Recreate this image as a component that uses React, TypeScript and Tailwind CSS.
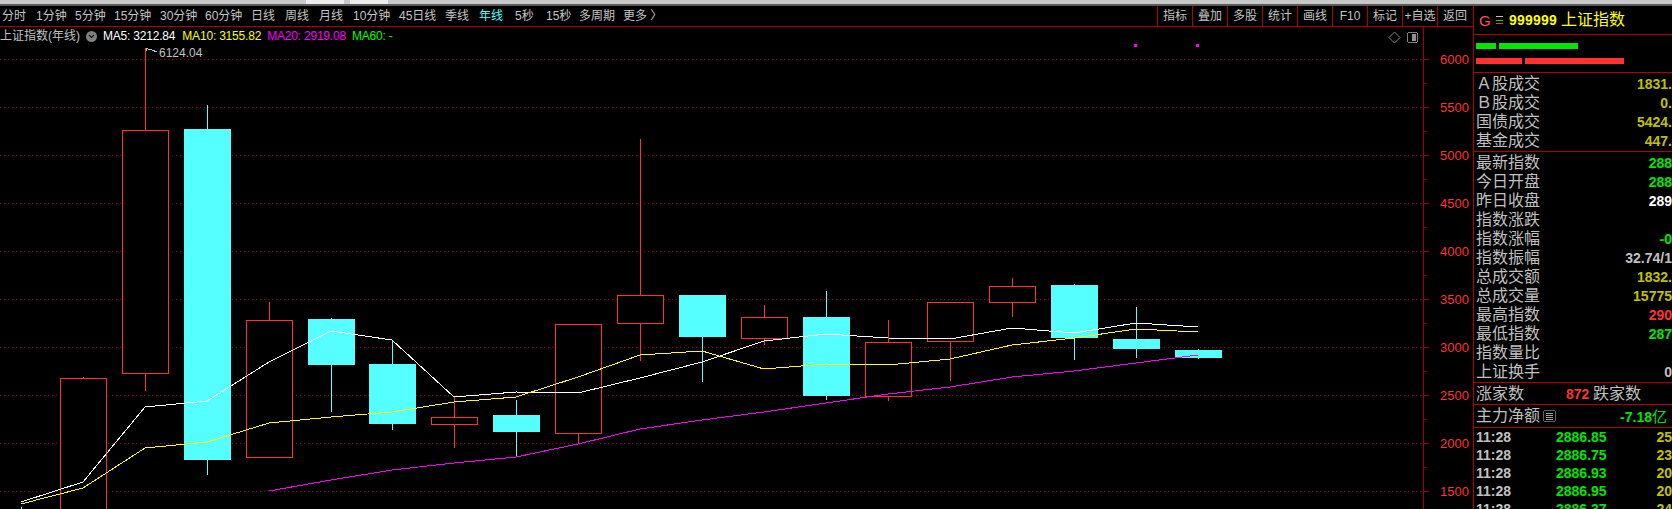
const CJK = "font-['Liberation_Sans','Noto_Sans_CJK_SC',sans-serif]";

const periods = [
  { label: "分时", cls: "w-[24px]" },
  { label: "1分钟", cls: "w-[30px] ml-[10px]" },
  { label: "5分钟", cls: "w-[30px] ml-[9px]" },
  { label: "15分钟", cls: "w-[36px] ml-[9px]" },
  { label: "30分钟", cls: "w-[36px] ml-[10px]" },
  { label: "60分钟", cls: "w-[36px] ml-[9px]" },
  { label: "日线", cls: "w-[24px] ml-[10px]" },
  { label: "周线", cls: "w-[24px] ml-[10px]" },
  { label: "月线", cls: "w-[24px] ml-[10px]" },
  { label: "10分钟", cls: "w-[36px] ml-[10px]" },
  { label: "45日线", cls: "w-[36px] ml-[10px]" },
  { label: "季线", cls: "w-[24px] ml-[10px]" },
  { label: "年线", cls: "w-[24px] ml-[10px] text-[#55ffff]" },
  { label: "5秒", cls: "w-[18px] ml-[12px]" },
  { label: "15秒", cls: "w-[24px] ml-[13px]" },
  { label: "多周期", cls: "w-[36px] ml-[9px]" },
  { label: "更多 〉", cls: "w-[36px] ml-[8px]" },
];

const tools = ["指标", "叠加", "多股", "统计", "画线", "F10", "标记", "+自选", "返回"];

const GRID = [59, 107, 155, 203, 251, 299, 347, 395, 443, 491];
const MINOR = [83, 131, 179, 227, 275, 323, 371, 419, 467];
const AXIS = ["6000", "5500", "5000", "4500", "4000", "3500", "3000", "2500", "2000", "1500"];

// x = candle left edge, top/bottom = body, hi/lo = wick
const candles = [
  { x: 60, top: 378, bottom: 520, hi: 377, lo: 530, up: true },
  { x: 122, top: 130, bottom: 373, hi: 48, lo: 391, up: true },
  { x: 184, top: 129, bottom: 460, hi: 105, lo: 475, up: false },
  { x: 246, top: 320, bottom: 457, hi: 302, lo: 457, up: true },
  { x: 308, top: 319, bottom: 365, hi: 318, lo: 412, up: false },
  { x: 369, top: 364, bottom: 424, hi: 340, lo: 430, up: false },
  { x: 431, top: 417, bottom: 424, hi: 397, lo: 448, up: true },
  { x: 493, top: 415, bottom: 432, hi: 400, lo: 456, up: false },
  { x: 555, top: 324, bottom: 433, hi: 324, lo: 444, up: true },
  { x: 617, top: 295, bottom: 323, hi: 139, lo: 361, up: true },
  { x: 679, top: 295, bottom: 337, hi: 295, lo: 382, up: false },
  { x: 741, top: 317, bottom: 338, hi: 305, lo: 345, up: true },
  { x: 803, top: 317, bottom: 396, hi: 291, lo: 400, up: false },
  { x: 865, top: 342, bottom: 396, hi: 320, lo: 401, up: true },
  { x: 927, top: 302, bottom: 341, hi: 302, lo: 381, up: true },
  { x: 989, top: 286, bottom: 302, hi: 278, lo: 317, up: true },
  { x: 1051, top: 285, bottom: 338, hi: 284, lo: 360, up: false },
  { x: 1113, top: 339, bottom: 349, hi: 307, lo: 358, up: false },
  { x: 1175, top: 350, bottom: 358, hi: 349, lo: 359, up: false },
];

const ma5 = "21,502 83,482 145,407 207,401 269,362 331,331 392,340 454,397 516,392 578,393 640,378 702,362 764,341 826,334 888,338 950,339 1012,328 1074,333 1136,323 1198,327";
const ma10 = "21,504 83,488 145,448 207,442 269,423 331,417 392,412 454,402 516,397 578,377 640,355 702,351 764,369 826,364 888,365 950,359 1012,345 1074,338 1136,329 1198,332";
const ma20 = "269,491 331,480 392,470 454,463 516,457 578,444 640,429 702,420 764,412 826,403 888,394 950,387 1012,377 1074,371 1136,363 1198,355";

function Chart() {
  return (
    <svg width="1473" height="482" viewBox="0 27 1473 482" shapeRendering="crispEdges" className="block">
      {GRID.map((y) => (
        <line key={y} x1="0" x2="1423" y1={y + 0.5} y2={y + 0.5} stroke="#a80000" strokeDasharray="1 3" />
      ))}
      {GRID.map((y) => (
        <line key={y} x1="1423" x2="1429" y1={y + 0.5} y2={y + 0.5} stroke="#a80000" />
      ))}
      {MINOR.map((y) => (
        <line key={y} x1="1423" x2="1426" y1={y + 0.5} y2={y + 0.5} stroke="#a80000" />
      ))}
      <line x1="1423.5" x2="1423.5" y1="27" y2="509" stroke="#a80000" />
      <line x1="21.5" x2="21.5" y1="507" y2="509" stroke="#55ffff" />
      {candles.map((c) => {
        const color = c.up ? "#ff3232" : "#55ffff";
        const mid = c.x + 23.5;
        return (
          <g key={c.x}>
            <line x1={mid} x2={mid} y1={c.hi} y2={c.top} stroke={color} />
            <line x1={mid} x2={mid} y1={c.bottom} y2={c.lo} stroke={color} />
            {c.up ? (
              <rect x={c.x + 0.5} y={c.top + 0.5} width="46" height={c.bottom - c.top} fill="#000" stroke={color} />
            ) : (
              <rect x={c.x} y={c.top} width="47" height={c.bottom - c.top} fill={color} />
            )}
          </g>
        );
      })}
      <polyline points={ma5} fill="none" stroke="#ffffff" />
      <polyline points={ma10} fill="none" stroke="#ffff00" />
      <polyline points={ma20} fill="none" stroke="#ff00ff" />
      <rect x="1134" y="44" width="3" height="3" fill="#ff00ff" />
      <rect x="1196" y="44" width="3" height="3" fill="#ff00ff" />
      {/* peak marker */}
      <path d="M146 51 V48 H148 M148 49 L152 50 L157 52" fill="none" stroke="#c0c0c0" />
      <path d="M1394.5 32 L1400 37.5 L1394.5 43 L1389 37.5 Z" fill="none" stroke="#808080" shapeRendering="auto" />
      <rect x="1407.5" y="32.5" width="10" height="10" rx="2" fill="#000" stroke="#808080" />
      <rect x="1412" y="34" width="4" height="7" fill="#909090" />
    </svg>
  );
}

function Toolbar() {
  return (
    <div className="flex h-[21px] items-stretch border-b border-[#b00000]">
      <div className="flex flex-1 items-center pl-[2px] text-[12px] leading-none text-[#c4c4c4]">
        {periods.map((p) => (
          <span key={p.label} className={`${p.cls} whitespace-nowrap`}>
            {p.label}
          </span>
        ))}
      </div>
      <div className="flex w-[316px]">
        {tools.map((t) => (
          <div
            key={t}
            className="flex w-[35px] items-center justify-center border-l border-[#b00000] text-[12px] leading-none whitespace-nowrap text-[#c4c4c4]"
          >
            {t}
          </div>
        ))}
      </div>
    </div>
  );
}

const block1 = [
  { label: "Ａ股成交", value: "1831.", cls: "text-[#c0c000]" },
  { label: "Ｂ股成交", value: "0.", cls: "text-[#c0c000]" },
  { label: "国债成交", value: "5424.", cls: "text-[#c0c000]" },
  { label: "基金成交", value: "447.", cls: "text-[#c0c000]" },
];

const block2 = [
  { label: "最新指数", value: "288", cls: "text-[#00e600]" },
  { label: "今日开盘", value: "288", cls: "text-[#00e600]" },
  { label: "昨日收盘", value: "289", cls: "text-white" },
  { label: "指数涨跌", value: "", cls: "" },
  { label: "指数涨幅", value: "-0", cls: "text-[#00e600]" },
  { label: "指数振幅", value: "32.74/1", cls: "text-[#c0c0c0]" },
  { label: "总成交额", value: "1832.", cls: "text-[#c0c000]" },
  { label: "总成交量", value: "15775", cls: "text-[#c0c000]" },
  { label: "最高指数", value: "290", cls: "text-[#ff3232]" },
  { label: "最低指数", value: "287", cls: "text-[#00e600]" },
  { label: "指数量比", value: "", cls: "" },
  { label: "上证换手", value: "0", cls: "text-[#c0c0c0]" },
];

const ticks = [
  { price: "2886.85", vol: "25" },
  { price: "2886.75", vol: "23" },
  { price: "2886.93", vol: "20" },
  { price: "2886.95", vol: "20" },
  { price: "2886.37", vol: "24" },
];

function QuoteRow({ label, value, cls }: { label: string; value: string; cls: string }) {
  return (
    <div className="flex h-[19px] items-center justify-between pl-[2px]">
      <span className="text-[16px] leading-none text-[#c0c0c0]">{label}</span>
      <span className={`text-[14px] leading-none font-bold ${cls}`}>{value}</span>
    </div>
  );
}

function Sidebar() {
  return (
    <aside className="h-[503px] w-[199px] shrink-0 overflow-hidden border-l border-[#b00000]">
      <div className="flex h-[29px] items-center border-b border-[#b00000] pl-[5px]">
        <span className="w-[17px] text-[15px] leading-none text-[#ff5050]">G</span>
        <span className="flex h-[8px] w-[7px] flex-col justify-between">
          <span className="h-px bg-[#c0c0c0]" />
          <span className="h-px bg-[#00e600]" />
          <span className="h-px bg-[#ff3232]" />
        </span>
        <span className="ml-[6px] text-[14px] leading-none font-bold tracking-[0.2px] text-[#ffff00]">999999</span>
        <span className="ml-[4px] text-[16px] leading-none text-[#ffff00]">上证指数</span>
      </div>
      <div className="flex h-[38px] flex-col gap-[9px] border-b border-[#b00000] pt-[8px] pl-[2px]">
        <div className="flex gap-[3px]">
          <div className="h-[6px] w-[20px] bg-[#00e600]" />
          <div className="h-[6px] w-[79px] bg-[#00e600]" />
        </div>
        <div className="flex gap-[3px]">
          <div className="h-[6px] w-[46px] bg-[#ff3232]" />
          <div className="h-[6px] w-[99px] bg-[#ff3232]" />
        </div>
      </div>
      <div className="border-b border-[#b00000] py-px">
        {block1.map((r) => (
          <QuoteRow key={r.label} {...r} />
        ))}
      </div>
      <div className="border-b border-[#b00000] py-px">
        {block2.map((r) => (
          <QuoteRow key={r.label} {...r} />
        ))}
      </div>
      <div className="flex h-[22px] items-center border-b border-[#b00000] pl-[2px] text-[16px] leading-none text-[#c0c0c0]">
        <span className="w-[90px]">涨家数</span>
        <span className="w-[27px] text-[14px] font-bold text-[#ff3232]">872</span>
        <span>跌家数</span>
      </div>
      <div className="flex h-[23px] items-center border-b border-[#b00000] pl-[2px] text-[16px] leading-none text-[#c0c0c0]">
        <span>主力净额</span>
        <svg width="13" height="12" viewBox="0 0 13 12" className="ml-[3px]" shapeRendering="crispEdges">
          <rect x="0.5" y="0.5" width="12" height="11" rx="2" fill="none" stroke="#606060" />
          <path d="M3 3.5H10M3 5.5H10M3 7.5H10M3 9.5H10" stroke="#a0a0a0" />
        </svg>
        <span className="mr-[5px] ml-auto text-[14px] font-bold text-[#00e600]">
          -7.18<span className="text-[15px] font-normal">亿</span>
        </span>
      </div>
      <div>
        {ticks.map((t, i) => (
          <div key={i} className="flex h-[18px] items-center pl-[2px] text-[14px] leading-none font-bold">
            <span className="w-[80px] text-[#c0c0c0]">11:28</span>
            <span className="text-[#00e600]">{t.price}</span>
            <span className="ml-auto text-[#c0c000]">{t.vol}</span>
          </div>
        ))}
      </div>
    </aside>
  );
}

export default function App() {
  return (
    <div className={`h-[509px] w-[1672px] overflow-hidden bg-black ${CJK}`}>
      {/* window strip along the top, with two lighter tabs */}
      <div className="flex h-[6px] gap-[6px] border-b-2 border-[#5a5a5a] bg-[#c8c8c8] pl-[306px]">
        <div className="w-[38px] bg-[#ececec]" />
        <div className="w-[38px] bg-[#ececec]" />
      </div>
      <div className="flex">
        <div className="w-[1473px]">
          <Toolbar />
          <div className="relative">
            <Chart />
            <div className="absolute top-[2px] left-0 flex items-center text-[12px] leading-[14px] whitespace-nowrap">
              <span className="text-[#c0c0c0]">上证指数(年线)</span>
              <span className="mr-[6px] ml-[6px] flex h-[11px] w-[11px] items-center justify-center rounded-full bg-[#808080]">
                <svg width="7" height="5" viewBox="0 0 7 5">
                  <path d="M1 1L3.5 3.5L6 1" fill="none" stroke="#111" strokeWidth="1.2" />
                </svg>
              </span>
              <span className="tracking-[-0.2px] text-white">MA5: 3212.84</span>
              <span className="ml-[7px] tracking-[-0.2px] text-[#ffff00]">MA10: 3155.82</span>
              <span className="ml-[6px] tracking-[-0.2px] text-[#ff00ff]">MA20: 2919.08</span>
              <span className="ml-[6px] tracking-[-0.2px] text-[#00ff00]">MA60: -</span>
            </div>
            <span className="absolute top-[19px] left-[159px] text-[12px] leading-[14px] text-[#c0c0c0]">6124.04</span>
            <div className="absolute top-[26px] left-[1440px] flex flex-col gap-[34px] text-[13px] leading-[14px] text-[#ff3232]">
              {AXIS.map((a) => (
                <span key={a}>{a}</span>
              ))}
            </div>
          </div>
        </div>
        <Sidebar />
      </div>
    </div>
  );
}
